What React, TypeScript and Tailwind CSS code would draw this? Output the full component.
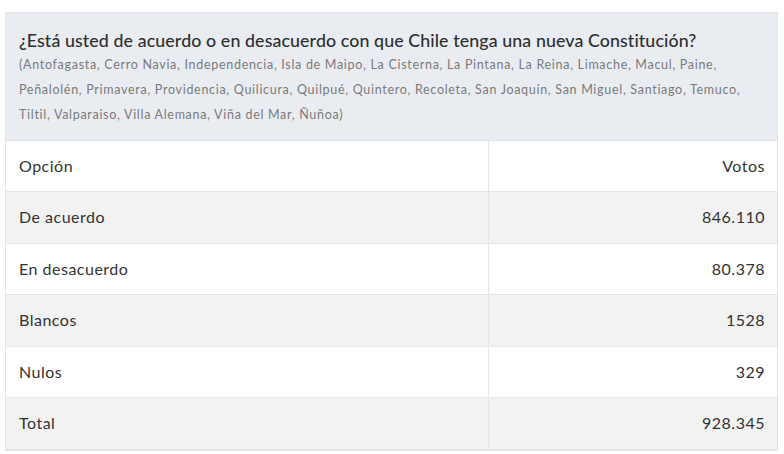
const rows = [
  { opcion: 'De acuerdo', votos: '846.110' },
  { opcion: 'En desacuerdo', votos: '80.378' },
  { opcion: 'Blancos', votos: '1528' },
  { opcion: 'Nulos', votos: '329' },
  { opcion: 'Total', votos: '928.345' },
];

export default function App() {
  return (
    <div
      className="w-[784px] h-[454px] bg-white pt-[12px] pl-[5px] pr-[6px] overflow-hidden text-[#333333]"
      style={{ fontFamily: 'Lato, "Open Sans", sans-serif' }}
    >
      <div className="border border-[#e3e3e3]">
        <div className="bg-[#e9edf2] px-[13px] pt-[16px] h-[128px] border-b border-[#dfe3e8]">
          <h1 className="text-[17.8px] leading-[22px] font-medium text-[#2f2f2f] tracking-[0.1px]">
            ¿Está usted de acuerdo o en desacuerdo con que Chile tenga una nueva Constitución?
          </h1>
          <p className="text-[12.5px] leading-[25px] text-[#7a7a7a] mt-[1px] tracking-[0.7px]">
            (Antofagasta, Cerro Navia, Independencia, Isla de Maipo, La Cisterna, La Pintana, La Reina, Limache, Macul, Paine,
            <br />
            Peñalolén, Primavera, Providencia, Quilicura, Quilpué, Quintero, Recoleta, San Joaquín, San Miguel, Santiago, Temuco,
            <br />
            Tiltil, Valparaiso, Villa Alemana, Viña del Mar, Ñuñoa)
          </p>
        </div>
        <div className="flex h-[51px] bg-white border-b border-[#e6e6e6] text-[16px] tracking-[0.5px]">
          <div className="w-[483px] border-r border-[#e6e6e6] flex items-center pl-[13px]">Opción</div>
          <div className="flex-1 flex items-center justify-end pr-[12px]">Votos</div>
        </div>
        {rows.map((r, i) => (
          <div
            key={r.opcion}
            className={
              'flex h-[51.5px] border-b border-[#e6e6e6] text-[16px] tracking-[0.5px] ' +
              (i % 2 === 0 ? 'bg-[#f2f2f2]' : 'bg-white')
            }
          >
            <div className="w-[483px] border-r border-[#e6e6e6] flex items-center pl-[13px]">{r.opcion}</div>
            <div className="flex-1 flex items-center justify-end pr-[12px]">{r.votos}</div>
          </div>
        ))}
      </div>
    </div>
  );
}
